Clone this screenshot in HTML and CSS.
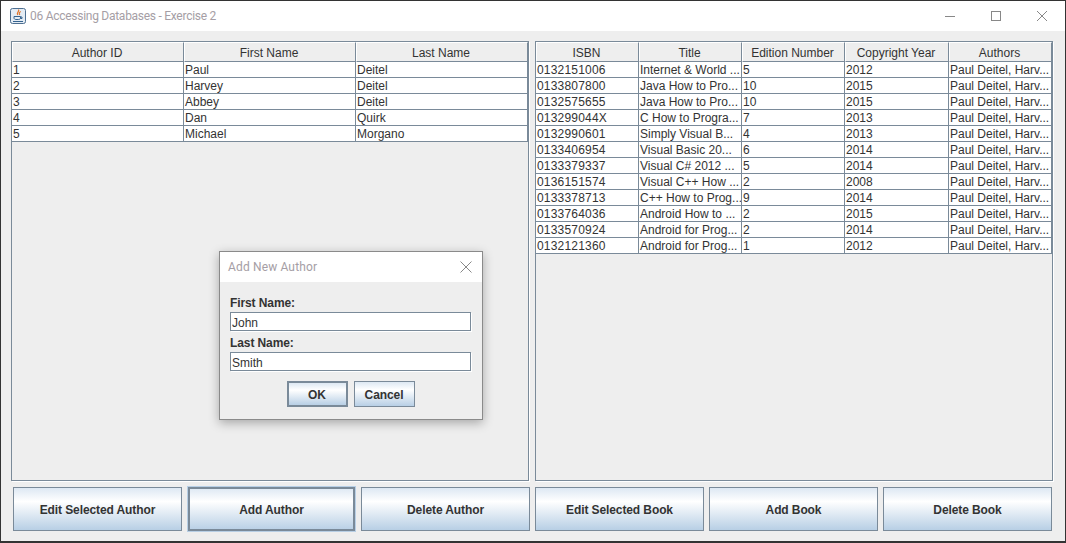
FILE: index.html
```html
<!DOCTYPE html>
<html lang="en">

<head>
    <meta charset="UTF-8">
    <title>06 Accessing Databases - Exercise 2</title>
    <link rel="stylesheet" href="styles.css">
</head>

<body>
    <div class="window">
        <div class="titlebar">
            <svg class="app-icon" width="16" height="16" viewBox="0 0 16 16">
                <rect x="0.5" y="0.5" width="15" height="15" rx="2" fill="#e4ecf4" stroke="#4d6f91" />
                <path d="M8.500 1.500c1.500 2-2.500 3-.8 5.500M10.800 3.500c-2 1-1.800 2-1 3.500" fill="none" stroke="#e0762c" stroke-width="1.200" />
                <path d="M4 8.500h6.500v1.500c0 1-1 1.500-2 1.500h-2.500c-1 0-2-.5-2-1.500zM10.500 9h1.500v1.500h-1.500" fill="none" stroke="#35638f" />
                <path d="M3 13.500h10" stroke="#35638f" />
            </svg>
            <span class="title">06 Accessing Databases - Exercise 2</span>
            <div class="controls">
                <svg class="ctl" width="46" height="30" viewBox="0 0 46 30"><path d="M18 15.500h10" stroke="#888" /></svg>
                <svg class="ctl" width="46" height="30" viewBox="0 0 46 30"><rect x="18.500" y="10.500" width="9" height="9" fill="none" stroke="#888" /></svg>
                <svg class="ctl" width="46" height="30" viewBox="0 0 46 30"><path d="M18 10l10 10M28 10l-10 10" stroke="#888" /></svg>
            </div>
        </div>

        <div class="content">
            <div class="panels">
                <div class="panel">
                    <table class="grid authors">
                        <thead>
                            <tr><th>Author ID</th><th>First Name</th><th>Last Name</th></tr>
                        </thead>
                        <tbody>
                            <tr><td>1</td><td>Paul</td><td>Deitel</td></tr>
                            <tr><td>2</td><td>Harvey</td><td>Deitel</td></tr>
                            <tr><td>3</td><td>Abbey</td><td>Deitel</td></tr>
                            <tr><td>4</td><td>Dan</td><td>Quirk</td></tr>
                            <tr><td>5</td><td>Michael</td><td>Morgano</td></tr>
                        </tbody>
                    </table>
                </div>
                <div class="panel">
                    <table class="grid books">
                        <thead>
                            <tr><th>ISBN</th><th>Title</th><th>Edition Number</th><th>Copyright Year</th><th>Authors</th></tr>
                        </thead>
                        <tbody>
                            <tr><td>0132151006</td><td>Internet &amp; World ...</td><td>5</td><td>2012</td><td>Paul Deitel, Harv...</td></tr>
                            <tr><td>0133807800</td><td>Java How to Pro...</td><td>10</td><td>2015</td><td>Paul Deitel, Harv...</td></tr>
                            <tr><td>0132575655</td><td>Java How to Pro...</td><td>10</td><td>2015</td><td>Paul Deitel, Harv...</td></tr>
                            <tr><td>013299044X</td><td>C How to Progra...</td><td>7</td><td>2013</td><td>Paul Deitel, Harv...</td></tr>
                            <tr><td>0132990601</td><td>Simply Visual B...</td><td>4</td><td>2013</td><td>Paul Deitel, Harv...</td></tr>
                            <tr><td>0133406954</td><td>Visual Basic 20...</td><td>6</td><td>2014</td><td>Paul Deitel, Harv...</td></tr>
                            <tr><td>0133379337</td><td>Visual C# 2012 ...</td><td>5</td><td>2014</td><td>Paul Deitel, Harv...</td></tr>
                            <tr><td>0136151574</td><td>Visual C++ How ...</td><td>2</td><td>2008</td><td>Paul Deitel, Harv...</td></tr>
                            <tr><td>0133378713</td><td>C++ How to Prog...</td><td>9</td><td>2014</td><td>Paul Deitel, Harv...</td></tr>
                            <tr><td>0133764036</td><td>Android How to ...</td><td>2</td><td>2015</td><td>Paul Deitel, Harv...</td></tr>
                            <tr><td>0133570924</td><td>Android for Prog...</td><td>2</td><td>2014</td><td>Paul Deitel, Harv...</td></tr>
                            <tr><td>0132121360</td><td>Android for Prog...</td><td>1</td><td>2012</td><td>Paul Deitel, Harv...</td></tr>
                        </tbody>
                    </table>
                </div>
            </div>

            <div class="actions">
                <div class="btn-row author-btns">
                    <button class="btn">Edit Selected Author</button>
                    <button class="btn focused">Add Author</button>
                    <button class="btn">Delete Author</button>
                </div>
                <div class="btn-row book-btns">
                    <button class="btn">Edit Selected Book</button>
                    <button class="btn">Add Book</button>
                    <button class="btn">Delete Book</button>
                </div>
            </div>
        </div>

        <div class="dialog">
            <div class="dialog-title">
                <span>Add New Author</span>
                <svg width="12" height="12" viewBox="0 0 12 12"><path d="M.5.5l11 11M11.500.5l-11 11" stroke="#888" /></svg>
            </div>
            <div class="dialog-body">
                <label class="field-label">First Name:</label>
                <input class="field" type="text" value="John">
                <label class="field-label">Last Name:</label>
                <input class="field" type="text" value="Smith">
                <div class="dialog-btns">
                    <button class="btn ok">OK</button>
                    <button class="btn cancel">Cancel</button>
                </div>
            </div>
        </div>
    </div>
</body>

</html>
```

FILE: styles.css
```css
* {
    margin: 0;
    padding: 0;
    box-sizing: border-box;
}

body {
    width: 1066px;
    height: 543px;
    overflow: hidden;
    font-family: "Liberation Sans", Arial, sans-serif;
    font-size: 12px;
    color: #333333;
}

.window {
    position: relative;
    display: flex;
    flex-direction: column;
    width: 1066px;
    height: 543px;
    border: 1px solid #333333;
    border-bottom-width: 2px;
    background-color: #eeeeee;
}

.titlebar {
    display: flex;
    align-items: center;
    height: 30px;
    padding-left: 9px;
    background-color: #ffffff;
}

.title {
    margin-left: 4px;
    font-family: Roboto, sans-serif;
    letter-spacing: -0.27px;
    color: #a59ea5;
}

.controls {
    display: flex;
    margin-left: auto;
}

.content {
    display: flex;
    flex-direction: column;
    padding: 10px 12px 0 10px;
}

.panels {
    display: flex;
    gap: 6px;
}

.panel {
    width: 518px;
    height: 440px;
    border: 1px solid #7a8a99;
    box-shadow: 1px 1px 0 #ffffff;
}

.grid {
    width: 100%;
    table-layout: fixed;
    border-collapse: separate;
    border-spacing: 0;
}

.grid th {
    height: 20px;
    padding: 2px 2px 0 0;
    font-weight: normal;
    text-align: center;
    background-color: #eeeeee;
    border-top: 1px solid #ffffff;
    border-left: 1px solid #ffffff;
    border-right: 1px solid #7a8a99;
    border-bottom: 1px solid #7a8a99;
}

.grid td {
    height: 16px;
    padding: 1px 0 0 1px;
    line-height: 14px;
    white-space: nowrap;
    overflow: hidden;
    background-color: #ffffff;
    border-right: 1px solid #7a8a99;
    border-bottom: 1px solid #7a8a99;
}

.authors th,
.authors td {
    width: 172px;
}

.books th,
.books td {
    width: 103px;
}

.books th:nth-child(4),
.books td:nth-child(4) {
    width: 104px;
}

/* isbn digits are a bit wider in the original */
.books td:first-child {
    letter-spacing: 0.2px;
}

.actions {
    display: flex;
    gap: 5px;
    margin-top: 6px;
    padding-left: 2px;
}

.btn-row {
    display: flex;
    width: 517px;
    gap: 6px;
}

.book-btns {
    gap: 5px;
}

.btn {
    flex: none;
    width: 169px;
    height: 44px;
    padding-top: 2px;
    font-family: inherit;
    font-size: 12px;
    font-weight: bold;
    letter-spacing: -0.1px;
    color: #333333;
    border: 1px solid #7a8a99;
    background: linear-gradient(#dde8f3, #ffffff 32%, #b8cfe5);
}

.focused {
    width: 167px;
    outline: 1px solid #b8cfe5;
    box-shadow: inset 0 0 0 1px #7a8a99;
}

.dialog {
    position: absolute;
    left: 218px;
    top: 250px;
    width: 264px;
    height: 169px;
    border: 1px solid #8a8a8a;
    background-color: #eeeeee;
    box-shadow: 0 3px 10px rgba(0, 0, 0, 0.3);
}

.dialog-title {
    display: flex;
    align-items: center;
    justify-content: space-between;
    height: 30px;
    padding: 0 10px 0 8px;
    font-family: Roboto, sans-serif;
    letter-spacing: 0.15px;
    color: #a59ea5;
    background-color: #ffffff;
}

.dialog-body {
    display: flex;
    flex-direction: column;
    padding: 14px 11px 0 10px;
}

.field-label {
    height: 16px;
    line-height: 14px;
    font-weight: bold;
    letter-spacing: -0.1px;
}

.field {
    height: 19px;
    margin-bottom: 5px;
    padding: 2px 0 0 1px;
    font-family: inherit;
    font-size: 12px;
    color: #333333;
    border: 1px solid #7a8a99;
    box-shadow: 1px 1px 0 #ffffff;
    outline: none;
}

.dialog-btns {
    display: flex;
    justify-content: center;
    gap: 6px;
    margin-top: 5px;
}

.dialog-btns .btn {
    width: 61px;
    height: 26px;
}

.dialog-btns .ok {
    border-width: 2px;
}
```
